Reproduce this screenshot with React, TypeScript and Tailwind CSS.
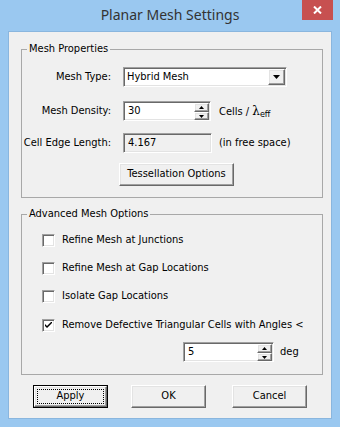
import React from "react";

const sunken =
  "border border-t-[#a0a0a0] border-l-[#a0a0a0] border-r-white border-b-white shadow-[inset_1px_1px_0_#696969,inset_-1px_-1px_0_#e3e3e3]";
const raised =
  "border border-t-white border-l-white border-r-[#696969] border-b-[#696969] shadow-[inset_-1px_-1px_0_#a0a0a0,inset_1px_1px_0_#e3e3e3] bg-[#f0f0f0]";

const Tri: React.FC<{ up?: boolean; size?: "sm" | "md" }> = ({ up, size = "sm" }) =>
  size === "md" ? (
    <svg width="7" height="4" viewBox="0 0 7 4" className="block">
      <path d="M0 0h7L3.5 4z" fill="#000" />
    </svg>
  ) : (
    <svg width="5" height="3" viewBox="0 0 5 3" className="block">
      <path d={up ? "M0 3h5L2.5 0z" : "M0 0h5L2.5 3z"} fill="#000" />
    </svg>
  );

// spin edit with the little up/down arrows
const SpinBox: React.FC<{ value: string; width: string }> = ({ value, width }) => (
  <div className={`flex h-[20px] bg-white ${sunken} ${width}`}>
    <span className="flex-1 pl-[4px] pt-[2px] leading-[14px]">{value}</span>
    <div className="flex flex-col mr-[1px] mt-[1px]">
      <div className={`w-[15px] h-[9px] flex items-center justify-center ${raised}`}>
        <Tri up />
      </div>
      <div className={`w-[15px] h-[8px] flex items-center justify-center ${raised}`}>
        <Tri />
      </div>
    </div>
  </div>
);

const CheckRow: React.FC<{ label: string; checked?: boolean; className?: string }> = ({
  label,
  checked,
  className = "",
}) => (
  <div className={`flex items-center h-[13px] ${className}`}>
    <div className={`ml-[20px] w-[13px] h-[13px] bg-white ${sunken} flex items-center justify-center`}>
      {checked && (
        <svg width="7" height="7" viewBox="0 0 7 7" className="block">
          <path d="M0 2v2l2 2 5-5V-1L2 4z" fill="#000" />
        </svg>
      )}
    </div>
    <span className="ml-[7px] whitespace-nowrap">{label}</span>
  </div>
);

const Group: React.FC<{ title: string; className?: string; children: React.ReactNode }> = ({
  title,
  className = "",
  children,
}) => (
  <div className={`relative ml-[12px] w-[302px] border border-[#a8a8a8] ${className}`}>
    <span className="absolute -top-[8px] left-[5px] px-[2px] bg-[#f0f0f0] leading-[14px]">{title}</span>
    {children}
  </div>
);

const Button: React.FC<{ label: string; isDefault?: boolean; className?: string }> = ({
  label,
  isDefault,
  className = "",
}) =>
  isDefault ? (
    <div className={`w-[75px] h-[23px] border border-black ${className}`}>
      <div className={`h-full ${raised} p-[2px]`}>
        <div className="h-full border border-dotted border-black flex items-center justify-center">
          {label}
        </div>
      </div>
    </div>
  ) : (
    <div className={`w-[75px] h-[23px] flex items-center justify-center ${raised} ${className}`}>
      {label}
    </div>
  );

export default function App() {
  return (
    <div className="w-[340px] h-[427px] bg-[#9ac8f0] flex flex-col font-['DejaVu_Sans_Condensed','Liberation_Sans',Arial,sans-serif] text-[11px] text-black">
      <div className="relative h-[31px] flex justify-center">
        <span className="pt-[5px] text-[14px] leading-[20px] text-[#333] font-['Noto_Sans',sans-serif]">
          Planar Mesh Settings
        </span>
        <div className="absolute right-[7px] top-0 w-[31px] h-[20px] bg-[#c75050] flex items-center justify-center">
          <svg width="9" height="8" viewBox="0 0 9 8" className="block">
            <path d="M1 0.5l7 7M8 0.5l-7 7" stroke="#fff" strokeWidth="2" />
          </svg>
        </div>
      </div>

      <div className="mx-[8px] h-[388px] bg-[#f0f0f0] border border-[#8ab6de] flex flex-col">
        <Group title="Mesh Properties" className="mt-[17px] h-[149px]">
          <div className="flex items-center mt-[17px]">
            <span className="w-[89px] text-right">Mesh Type:</span>
            <div className={`ml-[12px] w-[164px] h-[20px] bg-white flex ${sunken}`}>
              <span className="flex-1 pl-[3px] pt-[2px] leading-[14px]">Hybrid Mesh</span>
              <div className={`w-[17px] h-[16px] mt-[1px] mr-[1px] flex items-center justify-center ${raised}`}>
                <Tri size="md" />
              </div>
            </div>
          </div>
          <div className="flex items-center mt-[14px]">
            <span className="w-[89px] text-right">Mesh Density:</span>
            <SpinBox value="30" width="ml-[12px] w-[88px]" />
            <span className="ml-[8px]">
              Cells / <span className="font-['DejaVu_Serif',serif] text-[12px]">λ</span>
              <sub className="text-[9px]">eff</sub>
            </span>
          </div>
          <div className="flex items-center mt-[12px]">
            <span className="w-[89px] text-right whitespace-nowrap flex justify-end">Cell Edge Length:</span>
            <div className={`ml-[12px] w-[89px] h-[20px] pl-[4px] pt-[2px] leading-[14px] ${sunken}`}>
              4.167
            </div>
            <span className="ml-[7px]">(in free space)</span>
          </div>
          <div className={`ml-[97px] mt-[10px] w-[115px] h-[23px] flex items-center justify-center ${raised}`}>
            Tessellation Options
          </div>
        </Group>

        <Group title="Advanced Mesh Options" className="mt-[16px] h-[161px]">
          <CheckRow label="Refine Mesh at Junctions" className="mt-[19px]" />
          <CheckRow label="Refine Mesh at Gap Locations" className="mt-[15px]" />
          <CheckRow label="Isolate Gap Locations" className="mt-[15px]" />
          <CheckRow label="Remove Defective Triangular Cells with Angles <" checked className="mt-[16px]" />
          <div className="flex items-center mt-[10px]">
            <SpinBox value="5" width="ml-[161px] w-[91px]" />
            <span className="ml-[6px]">deg</span>
          </div>
        </Group>

        <div className="flex mt-[10px]">
          <Button label="Apply" isDefault className="ml-[24px]" />
          <Button label="OK" className="ml-[23px]" />
          <Button label="Cancel" className="ml-[26px]" />
        </div>
      </div>
    </div>
  );
}
